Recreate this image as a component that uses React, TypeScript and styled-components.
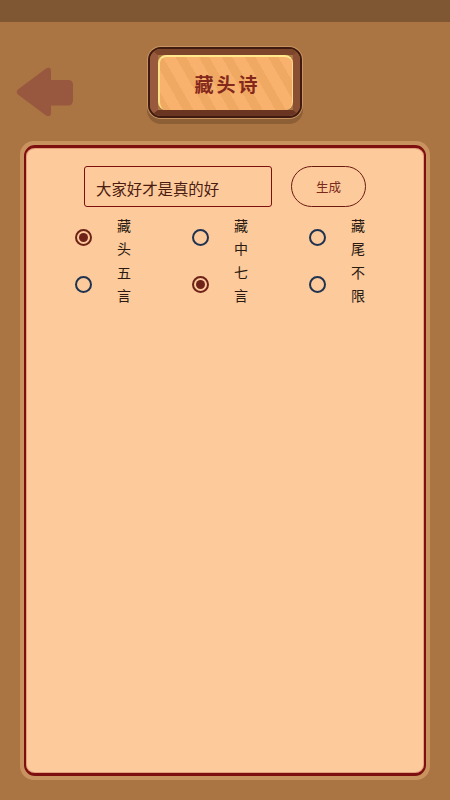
import React from "react";
import styled, { createGlobalStyle } from "styled-components";

const cjk = `"Noto Sans CJK SC", "Noto Sans", sans-serif`;

const firstRow = [
  { label: "藏头", checked: true },
  { label: "藏中", checked: false },
  { label: "藏尾", checked: false },
];

const secondRow = [
  { label: "五言", checked: false },
  { label: "七言", checked: true },
  { label: "不限", checked: false },
];

function BackArrow() {
  return (
    <svg width="58" height="50" viewBox="0 0 58 50">
      <path
        d="M2 22.5 L 30 1.5 Q 35 -1 35 4 L 35 13 L 52 13 Q 57 13 57 18 L 57 33 Q 57 38.5 52 38.5 L 35 38.5 L 35 46 Q 35 50.5 30 48.5 L 2 27.5 Q -0.5 25 2 22.5 Z"
        fill="#98583f"
      />
    </svg>
  );
}

function RadioOption({ label, checked }: { label: string; checked: boolean }) {
  return (
    <Option>
      <RadioCell>
        <RadioCircle $checked={checked}>{checked && <RadioDot />}</RadioCircle>
      </RadioCell>
      <OptionLabel>{label}</OptionLabel>
    </Option>
  );
}

export default function App() {
  return (
    <Page>
      <GlobalStyle />
      <TopBar />
      <Header>
        <BackButton>
          <BackArrow />
        </BackButton>
        <TitleFrame>
          <TitleBevel>
            <TitlePlate>
              <TitleText>藏头诗</TitleText>
            </TitlePlate>
          </TitleBevel>
        </TitleFrame>
      </Header>
      <Panel>
        <PanelInner>
          <InputRow>
            <PoemInput>大家好才是真的好</PoemInput>
            <GenerateButton>生成</GenerateButton>
          </InputRow>
          <OptionGrid>
            {firstRow.map((item) => (
              <RadioOption key={item.label} {...item} />
            ))}
            {secondRow.map((item) => (
              <RadioOption key={item.label} {...item} />
            ))}
          </OptionGrid>
        </PanelInner>
      </Panel>
    </Page>
  );
}

const GlobalStyle = createGlobalStyle`
  html,
  body {
    margin: 0;
    padding: 0;
    background-color: #ab7443;
    font-family: ${cjk};
  }

  *,
  *:before,
  *:after {
    box-sizing: border-box;
  }
`;

const Page = styled.main`
  width: 450px;
  height: 800px;
  display: flex;
  flex-direction: column;
  overflow: hidden;
  background-color: #ab7443;
`;

const TopBar = styled.div`
  height: 22px;
  flex: none;
  background-color: #7f5833;
`;

const Header = styled.header`
  position: relative;
  height: 119px;
  flex: none;
  display: flex;
  justify-content: center;
  padding-top: 25px;
`;

const BackButton = styled.div`
  position: absolute;
  left: 16px;
  top: 45px;
  line-height: 0;
`;

const TitleFrame = styled.div`
  width: 154px;
  height: 71px;
  margin-left: 0;
  border-radius: 13px;
  border: 2px solid #3f1a10;
  overflow: hidden;
  box-shadow: 0 0 0 1px #c79460, 0 5px 0 1px #8c5f36;
`;

const TitleBevel = styled.div`
  height: 100%;
  border-style: solid;
  border-width: 6px 7px 6px 8px;
  border-color: #7d4529 #8b5034 #6a3622 #99593c;
`;

const TitlePlate = styled.div`
  height: 100%;
  display: flex;
  align-items: center;
  justify-content: center;
  border-radius: 8px;
  border-top: 2px solid #ffe98c;
  border-left: 2px solid #ffdf86;
  border-right: 1px solid #ffd98a;
  background: repeating-linear-gradient(
    60deg,
    #f0a963 0 9px,
    #f8b26d 9px 20px
  );
`;

const TitleText = styled.span`
  font-family: ${cjk};
  font-size: 19px;
  font-weight: 700;
  letter-spacing: 3px;
  margin-right: -3px;
  color: #84281c;
`;

const Panel = styled.section`
  width: 410px;
  height: 639px;
  margin-left: 20px;
  padding: 4px;
  border-radius: 14px;
  background-color: #c9935f;
`;

const PanelInner = styled.div`
  height: 100%;
  display: flex;
  flex-direction: column;
  padding-top: 18px;
  border-radius: 11px;
  background-color: #fdca9b;
  border: 2px solid #7d0f0f;
  border-top-width: 3px;
  border-bottom-width: 3px;
  box-shadow: inset 0 0 0 1px #e39f7c;
`;

const InputRow = styled.div`
  display: flex;
  gap: 19px;
  padding-left: 58px;
`;

const PoemInput = styled.div`
  width: 188px;
  height: 41px;
  display: flex;
  align-items: center;
  padding: 3px 0 0 11px;
  border: 1px solid #7d0f0f;
  border-radius: 3px;
  font-size: 15.4px;
  color: #4a1c12;
`;

const GenerateButton = styled.button`
  width: 75px;
  height: 41px;
  padding: 0;
  background: transparent;
  border: 1px solid #6b1a10;
  border-radius: 21px;
  font-family: ${cjk};
  font-size: 12.5px;
  color: #7a2a1a;
`;

const OptionGrid = styled.div`
  display: grid;
  grid-template-columns: repeat(3, 117px);
  margin-top: 7px;
  padding-left: 37px;
`;

const Option = styled.div`
  display: flex;
  align-items: center;
  height: 47px;
`;

const RadioCell = styled.div`
  width: 40px;
  display: flex;
  justify-content: center;
`;

const RadioCircle = styled.div<{ $checked: boolean }>`
  width: 17px;
  height: 17px;
  display: flex;
  align-items: center;
  justify-content: center;
  border-radius: 50%;
  border: 2px solid ${(p) => (p.$checked ? "#6e2218" : "#1f3350")};
`;

const RadioDot = styled.div`
  width: 9px;
  height: 9px;
  border-radius: 50%;
  background-color: #6e2218;
`;

const OptionLabel = styled.div`
  width: 14px;
  margin: 0 0 2px 14px;
  font-size: 14px;
  line-height: 23px;
  color: #2a1a12;
`;
